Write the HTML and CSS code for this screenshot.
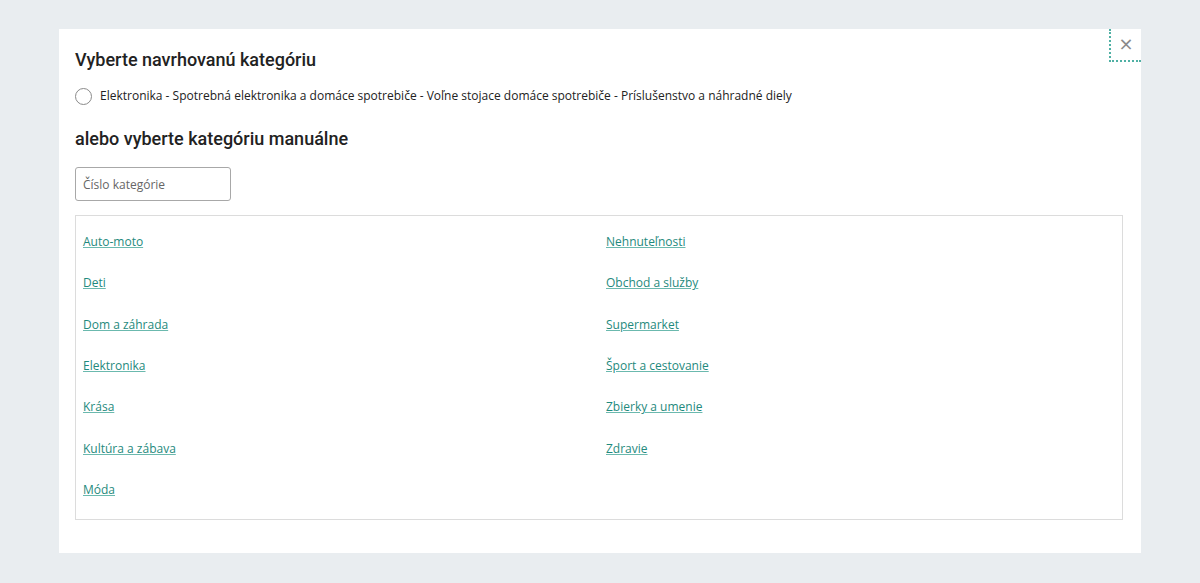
FILE: index.html
```html
<!DOCTYPE html>
<html lang="sk">
<head>
<meta charset="utf-8">
<link rel="stylesheet" href="styles.css">
</head>
<body>
<div class="modal">
  <button class="close" aria-label="Zavrieť">×</button>
  <h1 class="title">Vyberte navrhovanú kategóriu</h1>
  <label class="suggest">
    <span class="radio"></span>
    <span>Elektronika - Spotrebná elektronika a domáce spotrebiče - Voľne stojace domáce spotrebiče - Príslušenstvo a náhradné diely</span>
  </label>
  <h2 class="subtitle">alebo vyberte kategóriu manuálne</h2>
  <input class="num" type="text" placeholder="Číslo kategórie">
  <div class="list">
    <div class="col">
      <a href="#">Auto-moto</a>
      <a href="#">Deti</a>
      <a href="#">Dom a záhrada</a>
      <a href="#">Elektronika</a>
      <a href="#">Krása</a>
      <a href="#">Kultúra a zábava</a>
      <a href="#">Móda</a>
    </div>
    <div class="col">
      <a href="#">Nehnuteľnosti</a>
      <a href="#">Obchod a služby</a>
      <a href="#">Supermarket</a>
      <a href="#">Šport a cestovanie</a>
      <a href="#">Zbierky a umenie</a>
      <a href="#">Zdravie</a>
    </div>
  </div>
</div>
</body>
</html>
```
FILE: styles.css
```css
html, body { margin: 0; padding: 0; }
body {
  background: #e9edf0;
  padding: 29px 59px 30px 59px;
  font-family: "Open Sans", "Noto Sans", sans-serif;
  color: #222;
}
.modal {
  position: relative;
  background: #fff;
  padding: 19px 18px 33px 16px;
}
.close {
  position: absolute;
  top: 0;
  right: 0;
  width: 32px;
  height: 33px;
  border: none;
  border-left: 2px dotted #4fb0a4;
  border-bottom: 2px dotted #4fb0a4;
  background: transparent;
  color: #8a8a8a;
  font-family: "DejaVu Sans", sans-serif;
  font-size: 18px;
  line-height: 1;
  padding: 0 0 2px 0;
}
.title {
  margin: 0;
  font-family: Roboto, "Noto Sans", sans-serif;
  font-weight: 500;
  font-size: 18px;
  line-height: 24px;
  color: #222;
}
.suggest {
  display: flex;
  align-items: center;
  gap: 8px;
  margin-top: 15px;
  font-size: 12px;
  line-height: 18px;
  color: #222;
}
.radio {
  width: 15px;
  height: 15px;
  border: 1px solid #8a8a8a;
  border-radius: 50%;
  flex: none;
}
.subtitle {
  margin: 22px 0 0 0;
  font-family: Roboto, "Noto Sans", sans-serif;
  font-weight: 500;
  font-size: 18px;
  line-height: 24px;
  color: #222;
}
.num {
  display: block;
  box-sizing: border-box;
  margin-top: 16px;
  width: 156px;
  height: 34px;
  border: 1px solid #a8a8a8;
  border-radius: 3px;
  padding: 0 7px;
  font-family: "Open Sans", sans-serif;
  font-size: 12px;
  color: #222;
}
.num::placeholder { color: #666; }
.list {
  margin-top: 14px;
  border: 1px solid #dcdcdc;
  display: grid;
  grid-template-columns: 1fr 1fr;
  padding: 16px 0 19px 0;
}
.col {
  display: flex;
  flex-direction: column;
  align-items: flex-start;
  row-gap: 21.33px;
  padding-left: 7px;
}
.col a {
  font-size: 12px;
  line-height: 20px;
  color: #1f8a7d;
  text-decoration: underline;
  text-decoration-color: #6bb9ae;
}
```
